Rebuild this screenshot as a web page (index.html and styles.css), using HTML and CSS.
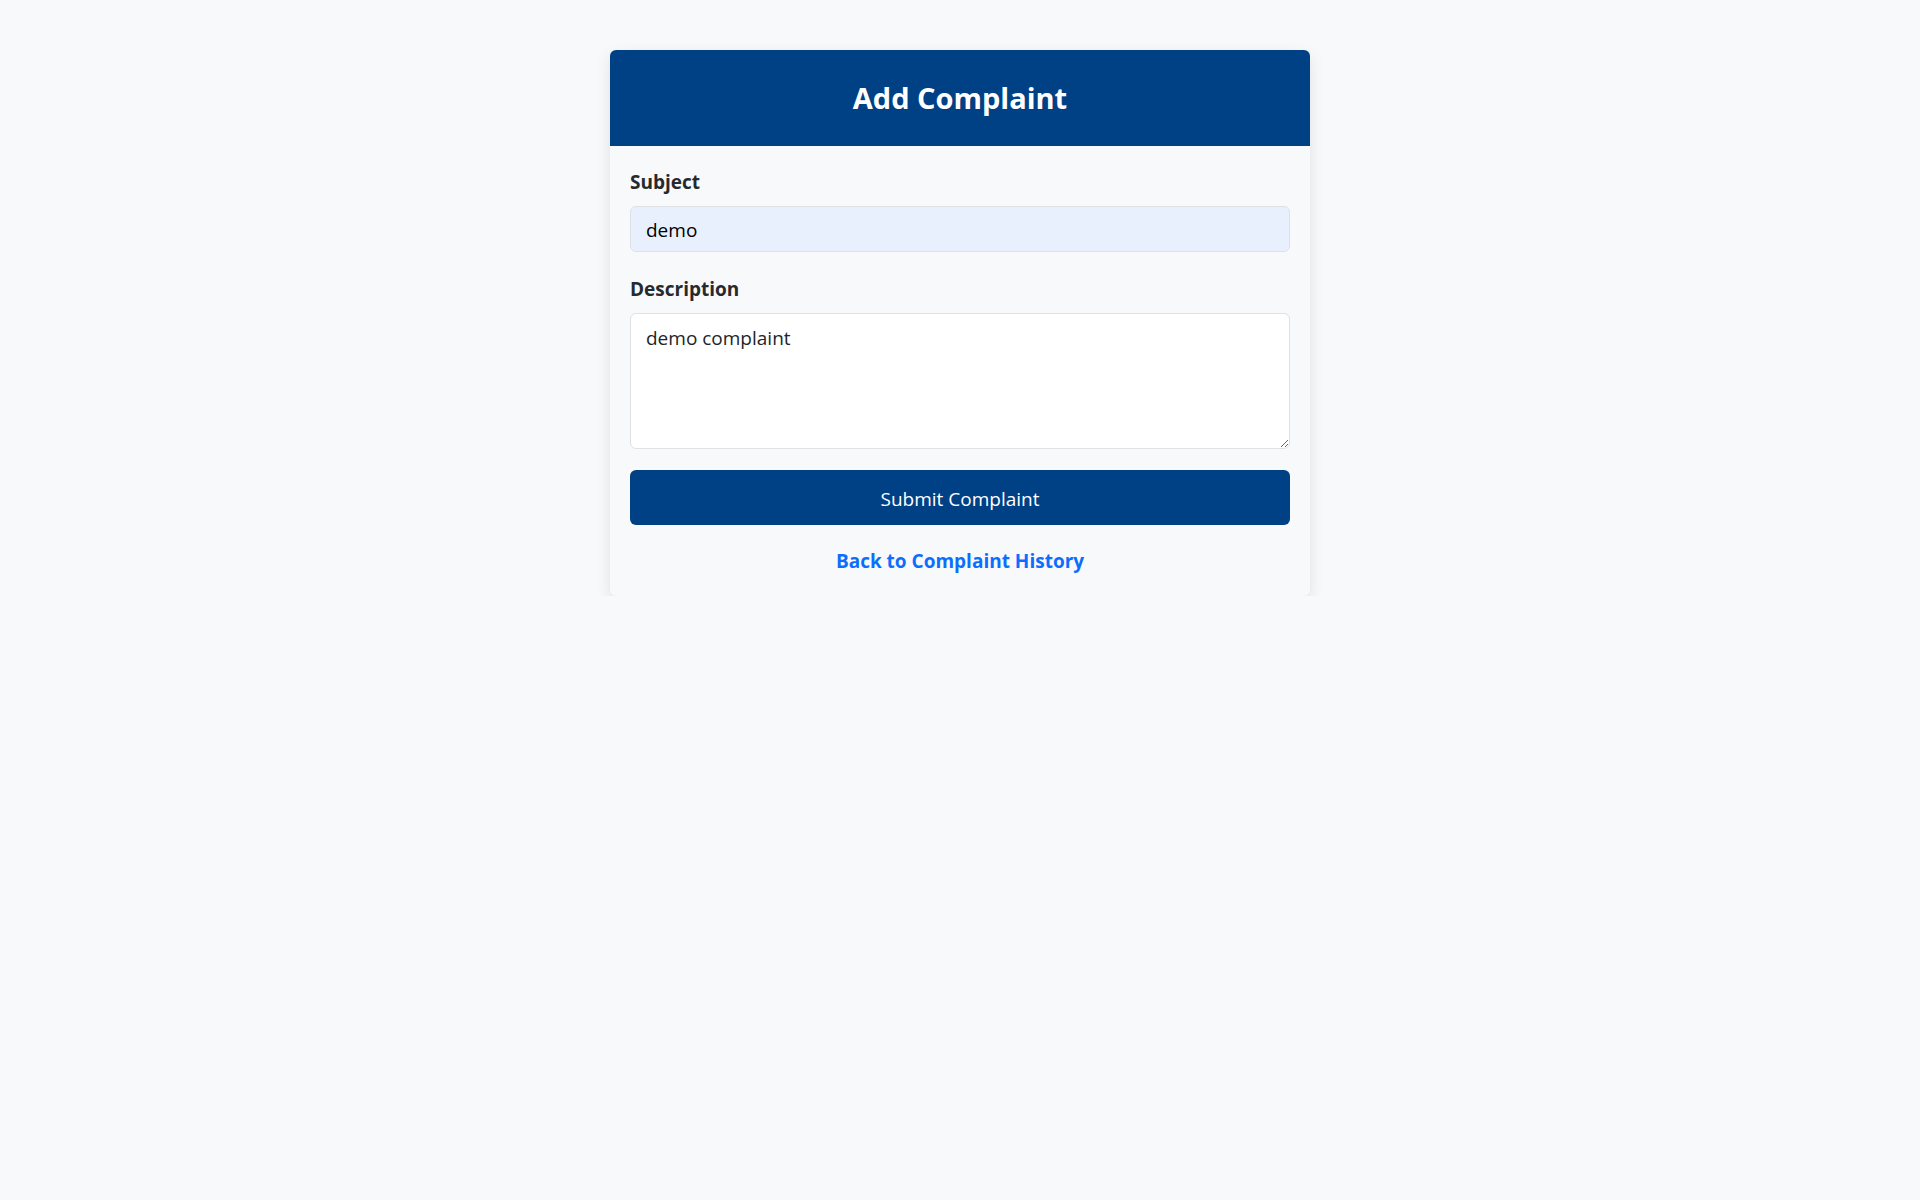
FILE: index.html
```html
<!DOCTYPE html>
<html lang="en">
<head>
<meta charset="utf-8">
<title>Add Complaint</title>
<link rel="stylesheet" href="styles.css">
</head>
<body>
<main class="page">
  <section class="card">
    <header class="card-header">
      <h2 class="card-title">Add Complaint</h2>
    </header>
    <form class="card-body">
      <div class="field">
        <label class="field-label" for="subject">Subject</label>
        <input class="field-input field-input--filled" id="subject" type="text" value="demo">
      </div>
      <div class="field">
        <label class="field-label" for="description">Description</label>
        <textarea class="field-input field-textarea" id="description" rows="4">demo complaint</textarea>
      </div>
      <button class="submit-btn" type="button">Submit Complaint</button>
      <a class="back-link" href="#">Back to Complaint History</a>
    </form>
  </section>
</main>
</body>
</html>
```

FILE: styles.css
```css
* {
  box-sizing: border-box;
}

html, body {
  margin: 0;
  padding: 0;
}

body {
  background: #f8f9fa;
  font-family: "Open Sans", "Noto Sans", "Liberation Sans", sans-serif;
  font-size: 19px;
  line-height: 30px;
  color: #212529;
}

.page {
  display: flex;
  justify-content: center;
  padding-top: 50px;
}

.card {
  width: 700px;
  background: #f8f9fa;
  border-radius: 6px;
  box-shadow: 0 5px 15px rgba(0, 0, 0, 0.1);
}

.card-header {
  background: #004085;
  border-radius: 6px 6px 0 0;
  padding: 30px 20px;
  text-align: center;
}

.card-title {
  margin: 0;
  color: #ffffff;
  font-size: 29px;
  line-height: 36px;
  font-weight: 700;
}

.card-body {
  display: flex;
  flex-direction: column;
  padding: 20px;
}

.field {
  display: flex;
  flex-direction: column;
  margin-bottom: 21px;
}

.field-label {
  font-weight: 700;
  line-height: 30px;
  padding-top: 1px;
  margin-bottom: 9px;
  color: #262a2e;
}

.field-input {
  display: block;
  width: 100%;
  font-family: inherit;
  font-size: 19px;
  line-height: 30px;
  padding: 8px 15px 6px;
  color: #212529;
  background: #ffffff;
  border: 1px solid #dee2e6;
  border-radius: 6px;
  outline: none;
}

.field-input--filled {
  height: 46px;
  background: #e8f0fe;
  color: #000000;
}

.field-textarea {
  height: 136px;
  padding-top: 9px;
  resize: vertical;
}

.submit-btn {
  display: block;
  width: 100%;
  height: 55px;
  padding: 2px 0 0;
  border: none;
  border-radius: 6px;
  background: #004085;
  color: #ffffff;
  font-family: inherit;
  font-size: 19px;
  line-height: 30px;
  cursor: pointer;
}

.back-link {
  display: block;
  margin-top: 20px;
  padding-top: 1px;
  text-align: center;
  font-weight: 700;
  font-size: 19px;
  line-height: 30px;
  color: #0d6efd;
  text-decoration: none;
}
```
